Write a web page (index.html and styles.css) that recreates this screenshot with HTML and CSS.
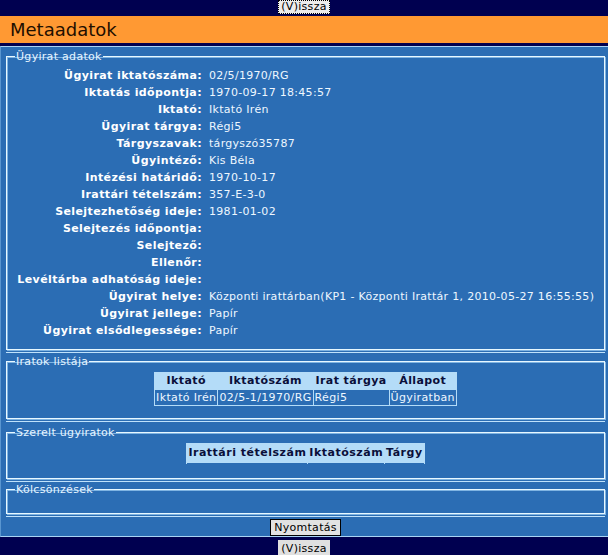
FILE: index.html
```html
<!DOCTYPE html>
<html lang="hu">
<head>
<meta charset="utf-8">
<title>Metaadatok</title>
<link rel="stylesheet" href="styles.css">
</head>
<body>
<div class="navbar"><button class="btn btn-focus">(V)issza</button></div>
<div class="header">Metaadatok</div>
<div class="main">
  <div class="section section-data">
    <fieldset class="fs fs-data">
      <legend>Ügyirat adatok</legend>
      <div class="grid">
        <div class="lbl">Ügyirat iktatószáma:</div><div class="val">02/5/1970/RG</div>
        <div class="lbl">Iktatás időpontja:</div><div class="val">1970-09-17 18:45:57</div>
        <div class="lbl">Iktató:</div><div class="val">Iktató Irén</div>
        <div class="lbl">Ügyirat tárgya:</div><div class="val">Régi5</div>
        <div class="lbl">Tárgyszavak:</div><div class="val">tárgyszó35787</div>
        <div class="lbl">Ügyintéző:</div><div class="val">Kis Béla</div>
        <div class="lbl">Intézési határidő:</div><div class="val">1970-10-17</div>
        <div class="lbl">Irattári tételszám:</div><div class="val">357-E-3-0</div>
        <div class="lbl">Selejtezhetőség ideje:</div><div class="val">1981-01-02</div>
        <div class="lbl">Selejtezés időpontja:</div><div class="val"></div>
        <div class="lbl">Selejtező:</div><div class="val"></div>
        <div class="lbl">Ellenőr:</div><div class="val"></div>
        <div class="lbl">Levéltárba adhatóság ideje:</div><div class="val"></div>
        <div class="lbl">Ügyirat helye:</div><div class="val">Központi irattárban(KP1 - Központi Irattár 1, 2010-05-27 16:55:55)</div>
        <div class="lbl">Ügyirat jellege:</div><div class="val">Papír</div>
        <div class="lbl">Ügyirat elsődlegessége:</div><div class="val">Papír</div>
      </div>
    </fieldset>
  </div>
  <div class="section section-list">
    <fieldset class="fs fs-list">
      <legend>Iratok listája</legend>
      <table class="tbl">
        <thead><tr><th>Iktató</th><th>Iktatószám</th><th>Irat tárgya</th><th>Állapot</th></tr></thead>
        <tbody><tr><td>Iktató Irén</td><td>02/5-1/1970/RG</td><td>Régi5</td><td>Ügyiratban</td></tr></tbody>
      </table>
    </fieldset>
  </div>
  <div class="section section-szerelt">
    <fieldset class="fs fs-szerelt">
      <legend>Szerelt ügyiratok</legend>
      <table class="tbl tbl2">
        <thead><tr><th>Irattári tételszám</th><th>Iktatószám</th><th>Tárgy</th></tr></thead>
      </table>
    </fieldset>
  </div>
  <div class="section section-kolcs">
    <fieldset class="fs fs-kolcs">
      <legend>Kölcsönzések</legend>
    </fieldset>
  </div>
  <div class="actions"><button class="btn btn-print">Nyomtatás</button></div>
</div>
<div class="navbar navbar-bottom"><button class="btn">(V)issza</button></div>
</body>
</html>
```
FILE: styles.css
```css
html, body {
  margin: 0;
  padding: 0;
  background: #000050;
  font-family: "DejaVu Sans", Verdana, sans-serif;
  font-size: 11px;
}

.navbar {
  height: 16px;
  background: #000050;
  display: flex;
  justify-content: center;
  align-items: flex-start;
}

.navbar-bottom {
  height: 15px;
  padding-top: 3px;
}

.btn {
  font-family: "DejaVu Sans", Verdana, sans-serif;
  font-size: 11px;
  line-height: 12px;
  letter-spacing: 0.3px;
  color: #000;
  background: #e4e4e4;
  border: 1px solid #000;
  padding: 0 2px;
  margin: 0;
  height: 14px;
}

.btn-focus {
  border: 1px dotted #000;
  background: #ececec;
}

.navbar-bottom .btn {
  height: 15px;
  line-height: 13px;
  border: none;
  padding: 1px 3px 0;
  background: #e0e0e0;
}

.header {
  background: #ff9933;
  height: 27px;
  line-height: 28px;
  padding-left: 10px;
  font-size: 18px;
  color: #1e0f00;
  border-bottom: 3px solid #000050;
}

.main {
  background: #2b6db4;
  border-top: 1px solid #a8d4f4;
  border-bottom: 1px solid #a8d4f4;
  border-left: 1px solid #5a96d0;
  padding: 0 3px 0 5px;
}

.section {
  border-bottom: 1px solid #bfe2fb;
  padding: 2px 0 2px 0;
}

.section-data {
  padding-top: 3px;
}

.section-list {
  padding-top: 2px;
}

.section-szerelt {
  padding-top: 4px;
}

.section-kolcs {
  padding-top: 1px;
}

.fs {
  margin: 0;
  padding: 0;
  border: 1px solid #e8f8ff;
  box-shadow: inset 1px 1px 0 #7fb4e2, 1px 1px 0 #7fb4e2;
  min-width: 0;
}

.fs legend {
  color: #e6f4ff;
  padding: 0 1px;
  margin-left: 8px;
  line-height: 13px;
  letter-spacing: 0.3px;
}

.fs-data {
  padding: 4px 0 10px 0;
}

.grid {
  display: grid;
  grid-template-columns: 191px auto;
  column-gap: 7px;
  grid-auto-rows: 17px;
  align-items: center;
  padding-left: 4px;
}

.lbl {
  font-weight: bold;
  color: #ffffff;
  text-align: right;
  white-space: nowrap;
  letter-spacing: 0.4px;
}

.val {
  color: #eef7ff;
  white-space: nowrap;
  letter-spacing: 0.3px;
}

.fs-list {
  height: 58px;
  padding-top: 4px;
}

.tbl {
  margin: 0 auto;
  border-collapse: separate;
  border-spacing: 1px;
  background: #b4dcf8;
  letter-spacing: 0.35px;
}

.tbl th {
  background: #b4dcf8;
  color: #0a0f3a;
  font-weight: bold;
  padding: 1px 2px 2px;
  line-height: 13px;
  letter-spacing: 0.4px;
}

.tbl td {
  background: #2b6db4;
  color: #eef7ff;
  padding: 1px;
  line-height: 13px;
  white-space: nowrap;
}

.fs-szerelt {
  height: 47px;
  padding-top: 4px;
}

.tbl2 {
  border-spacing: 1px 0;
}

.tbl2 th {
  padding: 3px 1px 4px;
  border-bottom: 1px solid #2b6db4;
  box-shadow: inset 0 -2px 0 #b4dcf8;
  letter-spacing: 0.5px;
}

.fs-kolcs {
  height: 29px;
}

.actions {
  display: flex;
  justify-content: center;
  padding: 2px 0 0;
}

.btn-print {
  height: 17px;
  line-height: 15px;
  background: #e2e2e2;
  border: 1px solid #000;
  padding: 0 3px;
}
```
